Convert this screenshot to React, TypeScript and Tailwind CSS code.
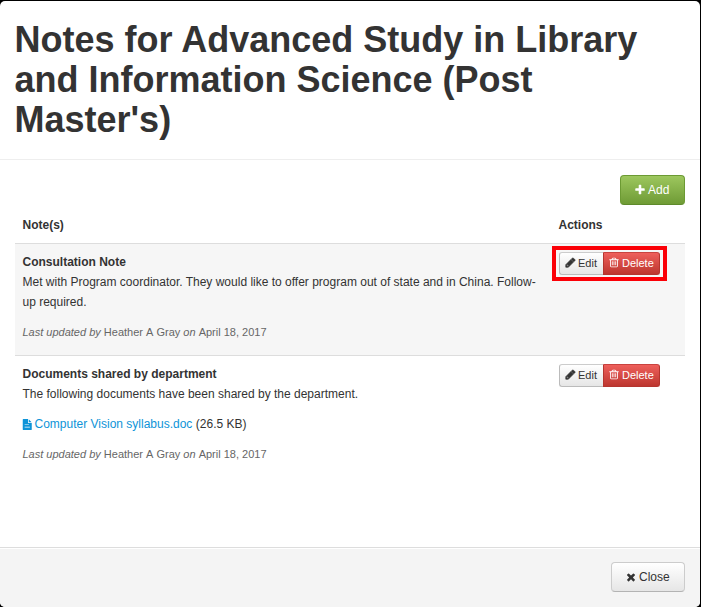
import type { ReactNode } from "react"
import clsx from "clsx"

const paths = {
  plus: "M1600 736v192q0 40-28 68t-68 28h-416v416q0 40-28 68t-68 28h-192q-40 0-68-28t-28-68v-416h-416q-40 0-68-28t-28-68v-192q0-40 28-68t68-28h416v-416q0-40 28-68t68-28h192q40 0 68 28t28 68v416h416q40 0 68 28t28 68z",
  pencil:
    "M491 1536l91-91-235-235-91 91v107h128v128h107zM960 416l416 416-832 832h-416v-416zm683 96q0 53-37 90l-166 166-416-416 166-165q36-38 90-38 53 0 91 38l235 234q37 39 37 91z",
  trash:
    "M704 736v576q0 14-9 23t-23 9h-64q-14 0-23-9t-9-23v-576q0-14 9-23t23-9h64q14 0 23 9t9 23zm256 0v576q0 14-9 23t-23 9h-64q-14 0-23-9t-9-23v-576q0-14 9-23t23-9h64q14 0 23 9t9 23zm256 0v576q0 14-9 23t-23 9h-64q-14 0-23-9t-9-23v-576q0-14 9-23t23-9h64q14 0 23 9t9 23zm128 724v-948h-896v948q0 22 7 40.5t14.5 27 10.5 8.5h832q3 0 10.5-8.5t14.5-27 7-40.5zm-672-1076h448l-48-117q-7-9-17-11h-317q-10 2-17 11zm928 32v64q0 14-9 23t-23 9h-96v948q0 83-47 143.5t-113 60.5h-832q-66 0-113-58.5t-47-141.5v-952h-96q-14 0-23-9t-9-23v-64q0-14 9-23t23-9h309l70-167q15-37 54-63t79-26h320q40 0 79 26t54 63l70 167h309q14 0 23 9t9 23z",
  times:
    "M1490 1322q0 40-28 68l-136 136q-28 28-68 28t-68-28l-294-294-294 294q-28 28-68 28t-68-28l-136-136q-28-28-28-68t28-68l294-294-294-294q-28-28-28-68t28-68l136-136q28-28 68-28t68 28l294 294 294-294q28-28 68-28t68 28l136 136q28 28 28 68t-28 68l-294 294 294 294q28 28 28 68z",
  file: "M1152 512v-472q22 14 36 28l408 408q14 14 28 36zm-128 32q0 40 28 68t68 28h544v1056q0 40-28 68t-68 28h-1344q-40 0-68-28t-28-68v-1600q0-40 28-68t68-28h800zm-576 352v100h736v-100zm0 384v110h896v-110z",
}

function Icon({
  name,
  className,
}: {
  name: keyof typeof paths
  className?: string
}) {
  return (
    <svg
      viewBox="0 0 1792 1792"
      preserveAspectRatio="none"
      fill="currentColor"
      aria-hidden="true"
      className={clsx("shrink-0 overflow-visible", className)}
    >
      <path fillRule={name === "file" ? "evenodd" : "nonzero"} d={paths[name]} />
    </svg>
  )
}

function NoteActions({ highlighted }: { highlighted?: boolean }) {
  return (
    <div className="relative flex h-[23px] w-[101px] text-[11px] leading-5">
      <button className="flex w-[44px] items-center rounded-l-[3px] border border-r-0 border-[#bbb] border-t-[#ccc] bg-linear-to-b from-white to-[#e6e6e6] pb-[2px] pl-[5px] text-[#333]">
        <Icon
          name="pencil"
          className="mr-[2px] size-[11px] stroke-current stroke-[110]"
        />
        Edit
      </button>
      <button className="flex w-[57px] items-center rounded-r-[3px] border border-[#b5352f] border-t-[#c9433f] bg-linear-to-b from-[#ee5f5b] to-[#bd362f] pb-[2px] pl-[4px] text-white">
        <Icon name="trash" className="mr-[2px] h-[11px] w-[12px]" />
        Delete
      </button>
      {highlighted && (
        <div className="absolute -top-[6px] -left-[7px] h-[35px] w-[115px] border-4 border-[#fb0007]" />
      )}
    </div>
  )
}

function NoteRow({
  title,
  striped,
  children,
}: {
  title: string
  striped?: boolean
  children: ReactNode
}) {
  return (
    <div
      className={clsx(
        "flex border-t border-[#ddd] pt-2 pr-2 pl-[7.5px]",
        striped ? "h-[112px] bg-[#f6f6f6]" : "h-[120px]"
      )}
    >
      <div className="w-[536.5px] pr-4 leading-5">
        <div className="font-bold">{title}</div>
        {children}
        <p className="mt-[10px] text-[11px] text-[#666] [font-kerning:none]">
          <em>Last updated by</em> Heather A Gray <em>on</em> April 18, 2017
        </p>
      </div>
      <NoteActions highlighted={striped} />
    </div>
  )
}

export default function App() {
  return (
    <div className="h-[607px] w-[701px] bg-black pt-px pr-px font-['Liberation_Sans',Arial,sans-serif] text-[12px] text-[#333]">
      <div className="flex h-full flex-col overflow-hidden rounded-[5px] bg-white">
        {/* Header */}
        <header className="h-[159px] border-b border-[#eee] pt-[19px] pl-[14.5px]">
          <h1 className="text-[36px] leading-10 font-bold">
            Notes for Advanced Study in Library
            <br />
            and Information Science (Post
            <br />
            Master&apos;s)
          </h1>
        </header>

        {/* Notes */}
        <main className="flex flex-1 flex-col px-[15px] pt-[15px]">
          <button className="flex h-[30px] w-[65px] items-center self-end rounded border border-[#6c9a33] border-b-[#5e8a2b] bg-linear-to-b from-[#9dc75e] to-[#6f9b35] pl-[13px] text-white">
            <Icon name="plus" className="mr-[2px] size-[12px]" />
            Add
          </button>
          <div className="flex h-[38px] items-center pt-[2px] pl-[7.5px] font-bold">
            <div className="w-[536px]">Note(s)</div>
            <div>Actions</div>
          </div>
          <NoteRow title="Consultation Note" striped>
            <p>
              Met with Program coordinator. They would like to offer program
              out of state and in China. Follow-
              <br />
              up required.
            </p>
          </NoteRow>
          <NoteRow title="Documents shared by department">
            <p>The following documents have been shared by the department.</p>
            <p className="mt-[10px] flex items-center">
              <a href="#" className="flex items-center text-[#0e94d8]">
                <Icon name="file" className="-ml-[0.5px] mr-[2px] h-[11px] w-[10.5px]" />
                Computer Vision syllabus.doc
              </a>
              <span className="ml-[3.5px]">(26.5 KB)</span>
            </p>
          </NoteRow>
        </main>

        {/* Footer */}
        <footer className="flex h-[60px] justify-end border-t border-[#ddd] bg-[#f4f4f4] px-[15px] pt-[14px] shadow-[inset_0_1px_0_#fff]">
          <button className="flex h-[30px] w-[74px] items-center rounded border border-[#ccc] border-b-[#b3b3b3] bg-linear-to-b from-white to-[#e6e6e6] pl-[13px] text-[#333]">
            <Icon name="times" className="mr-[2px] size-[12px]" />
            Close
          </button>
        </footer>
      </div>
    </div>
  )
}
